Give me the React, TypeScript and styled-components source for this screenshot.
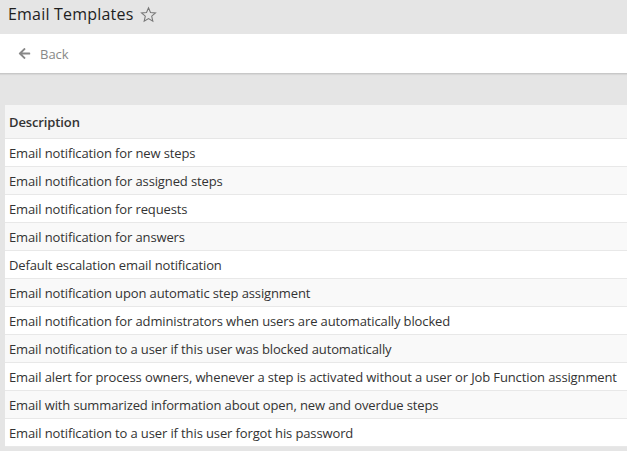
import React from "react";
import styled, { createGlobalStyle } from "styled-components";
import { FaArrowLeft } from "react-icons/fa";

const GlobalStyle = createGlobalStyle`
  html, body {
    margin: 0;
    padding: 0;
    background: #e5e5e5;
    font-family: "Open Sans", "Liberation Sans", sans-serif;
  }
`;

const Page = styled.div`
  width: 627px;
  height: 451px;
  overflow: hidden;
  background: #e5e5e5;
`;

const TitleBar = styled.div`
  box-sizing: border-box;
  height: 34px;
  display: flex;
  align-items: center;
  padding: 0 0 6px 8px;
  gap: 7px;
`;

const Title = styled.h1`
  margin: 0;
  font-size: 16px;
  font-weight: 400;
  letter-spacing: 0.2px;
  color: #1e1e1e;
  line-height: 20px;
`;

const Toolbar = styled.div`
  height: 39px;
  background: #fff;
  border-bottom: 1px solid #c8c8c8;
  box-shadow: 0 1px 1px rgba(0, 0, 0, 0.06);
  display: flex;
  align-items: center;
  padding-left: 18px;
`;

const BackLink = styled.a`
  display: flex;
  align-items: center;
  gap: 9px;
  color: #888;
  font-size: 13px;
  text-decoration: none;
  cursor: pointer;

  svg {
    color: #888;
    width: 13px;
    height: 13px;
  }
`;

const Content = styled.div`
  padding: 31px 0 0 5px;
`;

const Table = styled.table`
  width: 100%;
  border-collapse: collapse;
  background: #fff;
  font-size: 13px;
  letter-spacing: -0.12px;
  color: #333;
`;

const HeadCell = styled.th`
  text-align: left;
  font-weight: 600;
  background: #f5f5f5;
  height: 33px;
  padding: 0 4px;
  border-bottom: 1px solid #e6e6e6;
  line-height: 16px;
`;

const Row = styled.tr<{ $striped: boolean }>`
  background: ${(p) => (p.$striped ? "#f9f9f9" : "#fff")};
`;

const Cell = styled.td`
  height: 27px;
  padding: 0 4px;
  border-bottom: 1px solid #e8e8e8;
  white-space: nowrap;
  line-height: 16px;
`;

const templates = [
  "Email notification for new steps",
  "Email notification for assigned steps",
  "Email notification for requests",
  "Email notification for answers",
  "Default escalation email notification",
  "Email notification upon automatic step assignment",
  "Email notification for administrators when users are automatically blocked",
  "Email notification to a user if this user was blocked automatically",
  "Email alert for process owners, whenever a step is activated without a user or Job Function assignment",
  "Email with summarized information about open, new and overdue steps",
  "Email notification to a user if this user forgot his password",
];

const Star = () => (
  <svg width="17" height="17" viewBox="0 0 24 24" fill="none" stroke="#777" strokeWidth="1.5" strokeLinejoin="miter">
    <path d="M12 2.5l2.8 6.6 7.1.6-5.4 4.7 1.6 7-6.1-3.7-6.1 3.7 1.6-7-5.4-4.7 7.1-.6z" />
  </svg>
);

const App = () => {
  return (
    <Page>
      <GlobalStyle />
      <TitleBar>
        <Title>Email Templates</Title>
        <Star />
      </TitleBar>
      <Toolbar>
        <BackLink href="#">
          <FaArrowLeft />
          Back
        </BackLink>
      </Toolbar>
      <Content>
        <Table>
          <thead>
            <tr>
              <HeadCell>Description</HeadCell>
            </tr>
          </thead>
          <tbody>
            {templates.map((t, i) => (
              <Row key={t} $striped={i % 2 === 1}>
                <Cell>{t}</Cell>
              </Row>
            ))}
          </tbody>
        </Table>
      </Content>
    </Page>
  );
};

export default App;
